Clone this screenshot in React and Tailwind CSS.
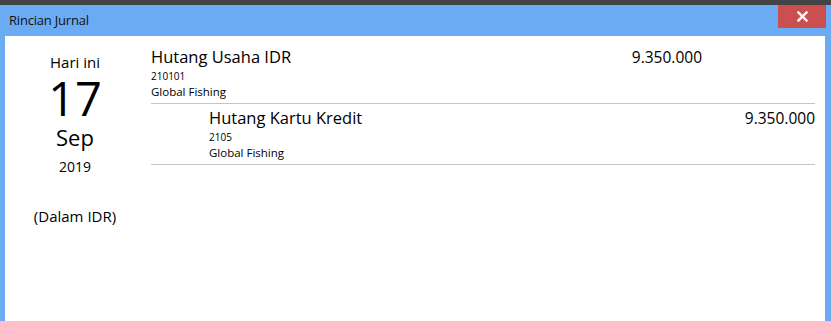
import React from "react";

const rows = [
  { name: "Hutang Usaha IDR", code: "210101", dept: "Global Fishing", debit: "9.350.000", credit: "" },
  { name: "Hutang Kartu Kredit", code: "2105", dept: "Global Fishing", debit: "", credit: "9.350.000", indent: true },
];

export default function App() {
  return (
    <div className="w-[831px] h-[321px] overflow-hidden bg-[#444444] pt-[5px] text-black" style={{ fontFamily: '"Open Sans", "Noto Sans", sans-serif' }}>
      <div className="h-[316px] bg-[#6aabf4] flex flex-col px-[5px] pr-[6px]">
        {/* Title bar */}
        <div className="h-[31px] flex items-start justify-between">
          <span className="text-[13px] leading-none pl-[4px] pt-[9px] tracking-[-0.2px] text-[#111]">Rincian Jurnal</span>
          <button className="w-[48px] h-[23px] bg-[#c9504e] text-white flex items-center justify-center -mr-[1px]">
            <svg width="11" height="11" viewBox="0 0 11 11">
              <path d="M1.5 1.5 L9.5 9.5 M9.5 1.5 L1.5 9.5" stroke="white" strokeWidth="2.4" strokeLinecap="square" />
            </svg>
          </button>
        </div>

        {/* Body */}
        <div className="flex-1 bg-white flex">
          <div className="w-[140px] flex flex-col items-center pt-[16px] shrink-0">
            <div className="text-[15px] leading-[20px]">Hari ini</div>
            <div className="text-[47px] leading-[44px] mt-[4px]">17</div>
            <div className="text-[22px] leading-[26px] mt-[4px]">Sep</div>
            <div className="text-[14px] leading-[20px] mt-[7px]">2019</div>
            <div className="text-[15px] leading-[20px] mt-[29px]">(Dalam IDR)</div>
          </div>

          <div className="w-[664px] ml-[6px] pt-[7px]">
            {rows.map((r, i) => (
              <div key={i} className="flex border-b border-[#c4c4c4] pt-[4px] pb-[3px]">
                <div className={`flex-1 ${r.indent ? "pl-[58px]" : ""}`}>
                  <div className="text-[16.5px] leading-[20px]">{r.name}</div>
                  <div className="text-[10px] leading-[14px] mt-[2px]">{r.code}</div>
                  <div className="text-[11.5px] leading-[16px] mt-[1px]">{r.dept}</div>
                </div>
                <div className="w-[100px] text-right text-[15.5px] leading-[20px]">{r.debit}</div>
                <div className="w-[113px] text-right text-[15.5px] leading-[20px]">{r.credit}</div>
              </div>
            ))}
          </div>
        </div>
      </div>
    </div>
  );
}
